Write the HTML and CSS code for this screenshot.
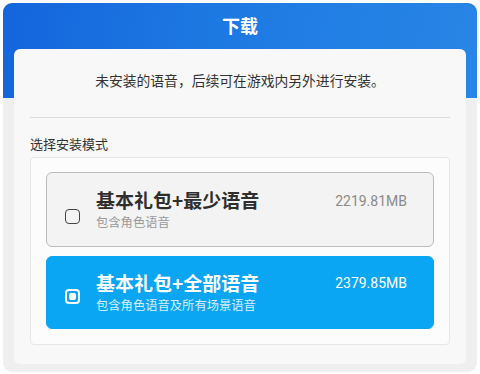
FILE: index.html
```html
<!DOCTYPE html>
<html lang="zh-CN">
<head>
<meta charset="utf-8">
<link rel="stylesheet" href="styles.css">
</head>
<body>
<div class="dialog">
  <div class="header">下载</div>
  <div class="card">
    <div class="notice">未安装的语音，后续可在游戏内另外进行安装。</div>
    <div class="divider"></div>
    <div class="label">选择安装模式</div>
    <div class="options">
      <div class="option">
        <span class="check"></span>
        <div class="texts">
          <div class="title">基本礼包+最少语音</div>
          <div class="sub">包含角色语音</div>
        </div>
        <div class="size">2219.81MB</div>
      </div>
      <div class="option selected">
        <span class="check"><span class="dot"></span></span>
        <div class="texts">
          <div class="title">基本礼包+全部语音</div>
          <div class="sub">包含角色语音及所有场景语音</div>
        </div>
        <div class="size">2379.85MB</div>
      </div>
    </div>
  </div>
</div>
</body>
</html>
```
FILE: styles.css
```css
html, body {
  margin: 0;
  padding: 0;
  background: #ffffff;
  font-family: "Noto Sans CJK SC", "Noto Sans", sans-serif;
}
.dialog {
  margin: 3px 3px 0 3px;
  width: 474px;
  height: 369px;
  box-sizing: border-box;
  border-radius: 9px;
  background:
    linear-gradient(to bottom, transparent 95px, #efefef 95px),
    linear-gradient(100deg, #1465dc 0%, #1d79e2 40%, #2a88e6 100%);
  display: flex;
  flex-direction: column;
  overflow: hidden;
}
.header {
  height: 46px;
  display: flex;
  align-items: center;
  justify-content: center;
  color: #ffffff;
  font-size: 18px;
  font-weight: bold;
  padding-bottom: 2px;
  box-sizing: border-box;
}
.card {
  margin: 0 11px;
  height: 315px;
  background: #f8f8f8;
  border-radius: 6px;
  padding: 0 16px;
  display: flex;
  flex-direction: column;
}
.notice {
  height: 62px;
  display: flex;
  align-items: center;
  justify-content: center;
  font-size: 13.8px;
  color: #333333;
}
.divider {
  height: 1px;
  background: #dcdcdc;
  margin: 6px 0 0 0;
}
.label {
  margin-top: 17px;
  font-size: 13px;
  color: #333333;
  line-height: 18px;
}
.options {
  margin-top: 4px;
  background: #fcfcfc;
  border: 1px solid #e6e6e6;
  border-radius: 4px;
  padding: 14px 15px 15px 15px;
  display: flex;
  flex-direction: column;
  gap: 9px;
}
.option {
  height: 75px;
  box-sizing: border-box;
  border: 1px solid #bcbcbc;
  border-radius: 6px;
  background: #f3f3f3;
  display: flex;
  align-items: center;
  padding: 0 26px 0 18px;
}
.option.selected {
  height: 73px;
  background: #0ba6f3;
  border-color: #0ba6f3;
}
.check {
  width: 15px;
  height: 15px;
  box-sizing: border-box;
  border: 1.5px solid #444444;
  border-radius: 4px;
  margin-top: 14px;
  margin-right: 16px;
  flex: none;
  display: flex;
  align-items: center;
  justify-content: center;
}
.selected .check {
  border: 2px solid #ffffff;
  margin-top: 8px;
}
.dot {
  width: 7px;
  height: 7px;
  background: #ffffff;
  border-radius: 2px;
}
.texts {
  flex: 1;
  display: flex;
  flex-direction: column;
}
.title {
  font-size: 19px;
  font-weight: bold;
  color: #2e2e2e;
  line-height: 24px;
}
.sub {
  font-size: 12.3px;
  color: #9a9a9a;
  line-height: 18px;
  margin-top: 1px;
}
.selected .title { color: #ffffff; }
.selected .sub { color: #d6efff; }
.size {
  font-family: Roboto, "Noto Sans", sans-serif;
  font-size: 14px;
  color: #8a8a8a;
  align-self: flex-start;
  margin-top: 20px;
}
.selected .size {
  color: #ffffff;
  margin-top: 18px;
}
```
